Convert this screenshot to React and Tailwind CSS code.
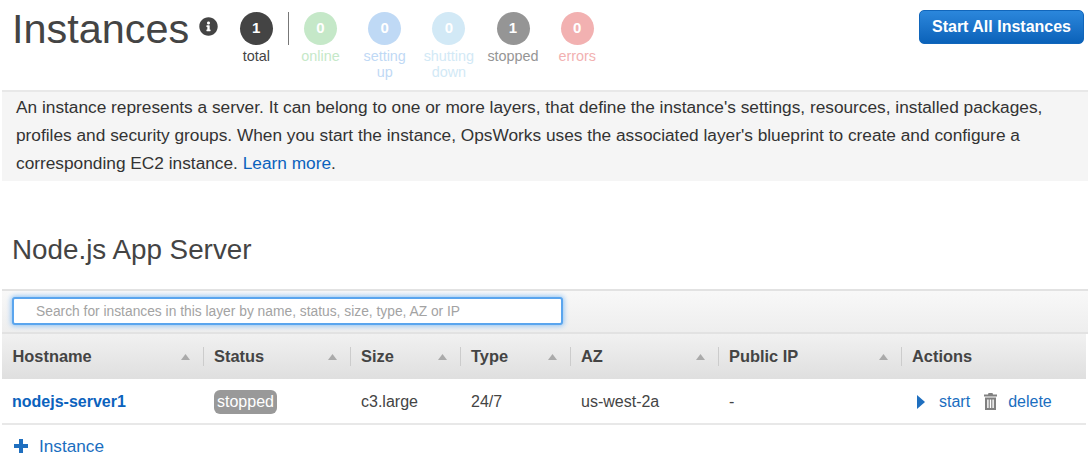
import React from 'react';
import { FaInfoCircle } from 'react-icons/fa';

const counts = [
  { n: 1, label: 'total', circle: 'bg-[#444444]', text: 'text-[#444444]' },
  { n: 0, label: 'online', circle: 'bg-[#c5e8c8]', text: 'text-[#c5e8c8]' },
  { n: 0, label: 'setting up', circle: 'bg-[#bfd9f5]', text: 'text-[#bfd9f5]' },
  { n: 0, label: 'shutting down', circle: 'bg-[#d2e9f6]', text: 'text-[#d2e9f6]' },
  { n: 1, label: 'stopped', circle: 'bg-[#959595]', text: 'text-[#959595]' },
  { n: 0, label: 'errors', circle: 'bg-[#f2b1b1]', text: 'text-[#f2b1b1]' },
];

const columns = [
  { name: 'Hostname', width: 'w-[201px]', pad: 'pl-[10.5px]' },
  { name: 'Status', width: 'w-[147px]', pad: 'pl-[11px]' },
  { name: 'Size', width: 'w-[110px]', pad: 'pl-[11px]' },
  { name: 'Type', width: 'w-[110px]', pad: 'pl-[11px]' },
  { name: 'AZ', width: 'w-[148px]', pad: 'pl-[11px]' },
  { name: 'Public IP', width: 'w-[183px]', pad: 'pl-[11px]' },
  { name: 'Actions', width: 'w-[185px]', pad: 'pl-[11px]', noSort: true },
];

const SortArrow = () => (
  <svg width="9" height="6" viewBox="0 0 9 6" className="absolute right-[13px] top-[20px]">
    <path d="M4.5 0 9 6H0z" fill="#aaaaaa" />
  </svg>
);

const TrashIcon = () => (
  <svg width="13" height="17" viewBox="0 0 13 17" fill="#808080" className="block">
    <path d="M4.5 0h4l.5 1.5h4V3.5H0V1.5h4z" />
    <path d="M1 4.5h11V17H1zM3.2 6.5v8.5h1.4V6.5zm2.6 0v8.5h1.4V6.5zm2.6 0v8.5h1.4V6.5z" fillRule="evenodd" />
  </svg>
);

const PlusIcon = () => (
  <svg width="14" height="14" viewBox="0 0 14 14" fill="#1f6fbf">
    <path d="M5 0h4v5h5v4H9v5H5V9H0V5h5z" />
  </svg>
);

export default function App() {
  return (
    <div className="w-[1090px] h-[468px] overflow-hidden bg-white px-[2px] font-['Liberation_Sans',sans-serif] text-[#444444]">
      <div className="relative flex h-[90px] items-start pl-[10px]">
        <h1 className="mt-[4px] text-[41.4px] leading-[50px] font-normal text-[#444444]">Instances</h1>
        <FaInfoCircle className="ml-[10px] mt-[17px] text-[#444444]" size={19} />
        <div className="ml-[6px] mt-[12px] flex">
          {counts.map((c, i) => (
            <div key={c.label} className="relative flex w-[64.2px] flex-col items-center">
              <div className={`flex h-[33px] w-[33px] items-center justify-center rounded-full text-[15px] font-bold text-white ${c.circle}`}>
                {c.n}
              </div>
              <div className={`mt-[3px] w-[60px] text-center text-[14.4px] leading-[16px] ${c.text}`}>{c.label}</div>
              {i === 0 && <div className="absolute right-[-0.5px] top-0 h-[33px] w-px bg-[#777777]" />}
            </div>
          ))}
        </div>
        <button className="ml-auto mr-[4px] mt-[10px] h-[34px] w-[165px] rounded-[5px] border border-[#1166bb] bg-gradient-to-b from-[#2b87dc] to-[#0a62b9] text-[16px] font-bold text-white">
          Start All Instances
        </button>
      </div>

      <div className="h-[91px] border-t-2 border-[#e8e8e8] bg-[#f5f5f5] px-[14px] pt-[1px] text-[17.3px] leading-[28px] text-[#333333]">
        An instance represents a server. It can belong to one or more layers, that define the instance's settings, resources, installed packages,
        <br />
        profiles and security groups. When you start the instance, OpsWorks uses the associated layer's blueprint to create and configure a
        <br />
        corresponding EC2 instance. <a className="text-[#0b62bd]">Learn more</a>.
      </div>

      <h2 className="mt-[51px] pl-[10px] text-[27.8px] leading-[36px] font-normal text-[#444444]">Node.js App Server</h2>

      <div className="mt-[21px] h-[45px] border-y-2 border-[#e2e2e2] bg-gradient-to-b from-[#f8f8f8] to-[#eeeeee] pl-[10px] pt-[6px]">
        <div className="flex h-[28px] w-[551px] items-center rounded-[3px] border-2 border-[#5aa5ee] bg-white pl-[22px] pt-[2px] text-[13.8px] text-[#a3a3a3] shadow-[0_0_5px_1px_#8fc3f5]">
          Search for instances in this layer by name, status, size, type, AZ or IP
        </div>
      </div>

      <table className="w-[1084px] table-fixed border-collapse">
        <thead>
          <tr className="h-[45px] bg-gradient-to-b from-[#f1f1f1] to-[#dfdfdf]">
            {columns.map((col, i) => (
              <th key={col.name} className={`relative text-left text-[16.4px] font-bold text-[#444444] ${col.width} ${col.pad}`}>
                {i > 0 && <span className="absolute left-0 top-[13px] h-[19px] w-px bg-[#cccccc]" />}
                {col.name}
                {!col.noSort && <SortArrow />}
              </th>
            ))}
          </tr>
        </thead>
        <tbody>
          <tr className="h-[45px] border-b-2 border-[#e8e8e8] text-[16px] text-[#444444]">
            <td className="pl-[10px] pt-[1px] font-bold text-[#0b62bd]">nodejs-server1</td>
            <td className="pl-[11px] pt-[2px]">
              <span className="inline-block h-[24px] rounded-[6px] bg-[#999999] px-[3px] text-[16px] leading-[24px] text-white">stopped</span>
            </td>
            <td className="pl-[11px] pt-[1px]">c3.large</td>
            <td className="pl-[11px] pt-[1px]">24/7</td>
            <td className="pl-[11px] pt-[1px]">us-west-2a</td>
            <td className="pl-[11px] pt-[1px]">-</td>
            <td className="pl-[11px] pt-[1px]">
              <div className="flex items-center text-[#1a6ec0]">
                <svg width="8" height="14" viewBox="0 0 8 14" className="ml-[5px]">
                  <path d="M0 0l8 7-8 7z" fill="#1f6fbf" />
                </svg>
                <span className="ml-[14px]">start</span>
                <span className="ml-[14px]"><TrashIcon /></span>
                <span className="ml-[11px]">delete</span>
              </div>
            </td>
          </tr>
        </tbody>
      </table>

      <div className="flex items-center pl-[12px] pt-[9px] text-[17.2px] leading-[24px] text-[#1a6ec0]">
        <PlusIcon />
        <span className="ml-[11px]">Instance</span>
      </div>
    </div>
  );
}
